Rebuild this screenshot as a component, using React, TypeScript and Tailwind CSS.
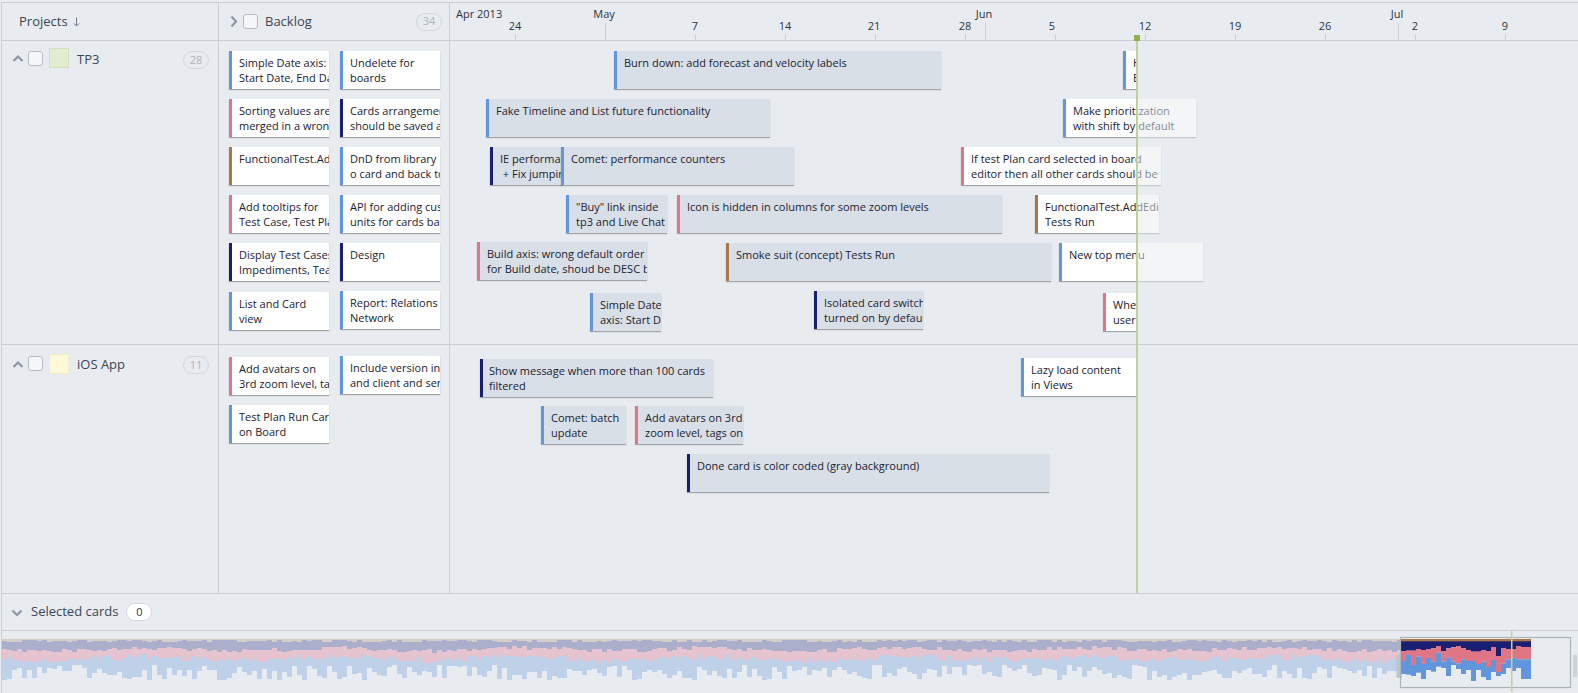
import React from "react";

type Kind = "blue" | "pink" | "navy" | "brown";

const edge: Record<Kind, string> = {
  blue: "border-l-[#6296dc]",
  pink: "border-l-[#e07585]",
  navy: "border-l-[#1b1f72]",
  brown: "border-l-[#a8774a]",
};

function Chevron({ dir, className }: { dir: "up" | "down" | "right"; className: string }) {
  const pts = dir === "up" ? "1.5,7 6,2.5 10.5,7" : dir === "down" ? "1.5,2.5 6,7 10.5,2.5" : "2.5,0.5 7,5.5 2.5,10.5";
  const vb = dir === "right" ? "0 0 9 11" : "0 0 12 9";
  return (
    <svg viewBox={vb} className={className} fill="none" stroke="#8c98a5" strokeWidth="2.2">
      <polyline points={pts} />
    </svg>
  );
}

function Check() {
  return <span className="block h-[15px] w-[15px] shrink-0 rounded-[3px] border border-[#b5bcc5] bg-[#f5f6f8]" />;
}

function Badge({ n, strong }: { n: string; strong?: boolean }) {
  return (
    <span
      className={
        strong
          ? "flex h-[18px] w-[26px] shrink-0 items-center justify-center rounded-full border border-[#d3d8df] bg-white text-[11px] text-[#2a3442]"
          : "flex h-[18px] w-[26px] shrink-0 items-center justify-center rounded-full border border-[#d3d8df] text-[11px] text-[#adb4bd]"
      }
    >
      {n}
    </span>
  );
}

function Lines({ lines, tight }: { lines: string[]; tight?: boolean }) {
  return (
    <div className={tight ? "pl-[6px] pt-[4px]" : "pl-[7px] pt-[4px]"}>
      {lines.map((l, i) => (
        <div key={i} className="h-[15px] whitespace-nowrap text-[11px] leading-[15px] text-[#1a2230]">
          {l}
        </div>
      ))}
    </div>
  );
}

function BacklogCard({ kind, lines, nudge }: { kind: Kind; lines: string[]; nudge?: string }) {
  return (
    <div
      className={`h-[38px] w-[100px] shrink-0 overflow-hidden border-l-[3px] bg-white shadow-[0_1px_1px_rgba(0,0,0,0.3)] ${edge[kind]} ${nudge ?? ""}`}
    >
      <Lines lines={lines} />
    </div>
  );
}

type TL = { pos: string; kind: Kind; lines: string[]; past?: boolean; tight?: boolean };

function TimelineCard({ pos, kind, lines, past, tight }: TL) {
  return (
    <div
      className={`absolute h-[38px] overflow-hidden border-l-[3px] shadow-[0_1px_1px_rgba(0,0,0,0.3)] ${pos} ${edge[kind]} ${
        past ? "bg-[#d9dfe7]" : "bg-white"
      }`}
    >
      <Lines lines={lines} tight={tight} />
    </div>
  );
}

const row1: TL[] = [
  { pos: "left-[164px] top-[10px] w-[327px]", kind: "blue", past: true, lines: ["Burn down: add forecast and velocity labels"] },
  { pos: "left-[36px] top-[58px] w-[284px]", kind: "blue", past: true, lines: ["Fake Timeline and List future functionality"] },
  { pos: "left-[40px] top-[106px] w-[72px]", kind: "navy", past: true, lines: ["IE performance", "\u00a0+ Fix jumping"] },
  { pos: "left-[111px] top-[106px] w-[233px]", kind: "blue", past: true, lines: ["Comet: performance counters"] },
  { pos: "left-[511px] top-[106px] w-[200px]", kind: "pink", lines: ["If test Plan card selected in board", "editor then all other cards should be"] },
  { pos: "left-[673px] top-[10px] w-[13px]", kind: "blue", lines: ["Hide", "Edit"] },
  { pos: "left-[613px] top-[58px] w-[133px]", kind: "blue", lines: ["Make prioritization", "with shift by default"] },
  { pos: "left-[116px] top-[154px] w-[101px]", kind: "blue", past: true, lines: ['"Buy" link inside', "tp3 and Live Chat"] },
  { pos: "left-[227px] top-[154px] w-[325px]", kind: "pink", past: true, lines: ["Icon is hidden in columns for some zoom levels"] },
  { pos: "left-[585px] top-[154px] w-[124px]", kind: "brown", lines: ["FunctionalTest.AddEdit", "Tests Run"] },
  { pos: "left-[27px] top-[201px] w-[170px]", kind: "pink", past: true, lines: ["Build axis: wrong default order", "for Build date, shoud be DESC by"] },
  { pos: "left-[276px] top-[202px] w-[325px]", kind: "brown", past: true, lines: ["Smoke suit (concept) Tests Run"] },
  { pos: "left-[609px] top-[202px] w-[144px]", kind: "blue", lines: ["New top menu"] },
  { pos: "left-[140px] top-[252px] w-[71px]", kind: "blue", past: true, lines: ["Simple Date", "axis: Start Date"] },
  { pos: "left-[364px] top-[250px] w-[109px]", kind: "navy", past: true, lines: ["Isolated card switch", "turned on by default"] },
  { pos: "left-[653px] top-[252px] w-[33px]", kind: "pink", lines: ["When", "user"] },
];

const row2: TL[] = [
  { pos: "left-[30px] top-[14px] w-[233px]", kind: "navy", past: true, tight: true, lines: ["Show message when more than 100 cards", "filtered"] },
  { pos: "left-[91px] top-[61px] w-[85px]", kind: "blue", past: true, lines: ["Comet: batch", "update"] },
  { pos: "left-[185px] top-[61px] w-[108px]", kind: "pink", past: true, lines: ["Add avatars on 3rd", "zoom level, tags on"] },
  { pos: "left-[237px] top-[109px] w-[362px]", kind: "navy", past: true, lines: ["Done card is color coded (gray background)"] },
  { pos: "left-[571px] top-[13px] w-[115px]", kind: "blue", lines: ["Lazy load content", "in Views"] },
];

const days = [
  { t: "24", c: "left-[65px]", l: "left-[54px]" },
  { t: "7", c: "left-[245px]", l: "left-[234px]" },
  { t: "14", c: "left-[335px]", l: "left-[324px]" },
  { t: "21", c: "left-[425px]", l: "left-[413px]" },
  { t: "28", c: "left-[515px]", l: "left-[504px]" },
  { t: "5", c: "left-[605px]", l: "left-[591px]" },
  { t: "12", c: "left-[695px]", l: "left-[684px]" },
  { t: "19", c: "left-[785px]", l: "left-[774px]" },
  { t: "26", c: "left-[875px]", l: "left-[864px]" },
  { t: "2", c: "left-[965px]", l: "left-[954px]" },
  { t: "9", c: "left-[1055px]", l: "left-[1044px]" },
];

const months = [
  { t: "May", c: "left-[155px]", l: "left-[134px]" },
  { t: "Jun", c: "left-[535px]", l: "left-[514px]" },
  { t: "Jul", c: "left-[948px]", l: "left-[927px]" },
];

function Axis() {
  return (
    <div className="relative h-full flex-1 text-[11px] leading-[15px] text-[#2a3442]">
      <span className="absolute left-[6px] top-[3px] whitespace-nowrap">Apr 2013</span>
      {months.map((m) => (
        <React.Fragment key={m.t}>
          <span className={`absolute top-[3px] w-[40px] text-center ${m.l}`}>{m.t}</span>
          <span className={`absolute bottom-0 h-[17px] w-px bg-[#c9ced6] ${m.c}`} />
        </React.Fragment>
      ))}
      {days.map((d) => (
        <React.Fragment key={d.t}>
          <span className={`absolute top-[15px] w-[22px] text-center ${d.l}`}>{d.t}</span>
          <span className={`absolute bottom-0 h-[6px] w-px bg-[#c9ced6] ${d.c}`} />
        </React.Fragment>
      ))}
    </div>
  );
}

const sel: [number, number, number][] = [
  [153, 183, 222], [152, 165, 224], [152, 195, 228], [147, 170, 218], [150, 192, 237], [147, 174, 210],
  [145, 185, 215], [138, 158, 200], [153, 185, 204], [145, 173, 228], [142, 185, 195], [138, 190, 207],
  [145, 178, 222], [150, 183, 210], [155, 183, 243], [155, 192, 210], [150, 185, 231], [153, 201, 240],
  [141, 180, 216], [168, 216, 228], [145, 190, 222], [147, 178, 204], [147, 173, 213], [138, 178, 204],
  [141, 178, 237], [141, 178, 237],
];

function Chart() {
  const cols: React.ReactNode[] = [];
  let seed = 12345;
  const rnd = () => {
    seed = (seed * 1103515245 + 12345) & 0x7fffffff;
    return seed / 0x7fffffff;
  };
  const Y = (y: number) => y - 631;
  for (let i = 0; i < 280; i++) {
    const x = i * 5;
    const wave = Math.sin(i / 6) * 1.5;
    const t1 = 640 + Math.floor(rnd() * 3);
    const p1 = 648 + Math.floor(rnd() * 4 + wave);
    const k1 = 656 + Math.floor(rnd() * 6 + wave);
    const b1 = Math.max(k1 + 4, 665 + Math.floor(rnd() * 16));
    cols.push(
      <g key={i}>
        <rect x={x} y={Y(639)} width="5" height={t1 - 639 + 1} className="fill-[#d6cec9]" />
        <rect x={x} y={Y(t1)} width="5" height={p1 - t1} className="fill-[#abafcb]" />
        <rect x={x} y={Y(p1)} width="5" height={k1 - p1} className="fill-[#e6c4cf]" />
        <rect x={x} y={Y(k1)} width="5" height={b1 - k1} className="fill-[#bed1e9]" />
      </g>
    );
  }
  sel.forEach(([a, b, c], i) => {
    const x = 1401 - 2 + i * 5;
    const y = (v: number) => Y(600 + v / 3);
    cols.push(
      <g key={`s${i}`}>
        <rect x={x} y={y(117)} width="5" height="3" className="fill-[#a8774a]" />
        <rect x={x} y={y(124)} width="5" height={(a - 124) / 3} className="fill-[#1b1f72]" />
        <rect x={x} y={y(a)} width="5" height={(b - a) / 3} className="fill-[#e07585]" />
        <rect x={x} y={y(b)} width="5" height={(c - b) / 3} className="fill-[#6296dc]" />
      </g>
    );
  });
  return (
    <svg viewBox="0 0 1576 61" className="block h-[61px] w-[1576px]">
      {cols}
      <rect x="1398.5" y="6.5" width="170" height="50" fill="none" stroke="#aab5b8" strokeWidth="1.2" />
      <rect x="1509" y="0" width="1.5" height="61" className="fill-[#bfd29a]" />
      <rect x="1394.5" y="24" width="1" height="22" className="fill-[#b5bcc0]" />
      <rect x="1396.5" y="24" width="1" height="22" className="fill-[#b5bcc0]" />
      <rect x="1571.5" y="24" width="1" height="22" className="fill-[#b5bcc0]" />
      <rect x="1573.5" y="24" width="1" height="22" className="fill-[#b5bcc0]" />
    </svg>
  );
}

function Overlay() {
  return <div className="absolute inset-y-0 left-[688px] right-0 bg-[#e8ebf0]/50" />;
}

export default function App() {
  return (
    <div className="h-[693px] w-[1578px] overflow-hidden bg-[#e8ebf0] pl-px pt-[2px] font-['Open_Sans',sans-serif]">
      <div className="flex h-full flex-col border-l border-t border-[#c9ced6]">
        <div className="relative flex flex-col">
          <div className="flex h-[38px] border-b border-[#c9ced6]">
            <div className="flex w-[217px] shrink-0 items-center gap-[5px] border-r border-[#c9ced6] pl-[17px] text-[13px] text-[#3b4654]">
              <span>Projects</span>
              <svg viewBox="0 0 7 10" className="h-[10px] w-[7px]" fill="none" stroke="#6f7a87" strokeWidth="1">
                <path d="M3.5 0.5V9M1 6.5L3.5 9L6 6.5" />
              </svg>
            </div>
            <div className="flex w-[231px] shrink-0 items-center border-r border-[#c9ced6] pl-[10px] text-[13px] text-[#3b4654]">
              <Chevron dir="right" className="h-[11px] w-[9px] shrink-0" />
              <span className="ml-[5px]"><Check /></span>
              <span className="ml-[7px] flex-1">Backlog</span>
              <span className="mr-[7px]"><Badge n="34" /></span>
            </div>
            <Axis />
          </div>

          <div className="flex h-[304px] border-b border-[#c9ced6]">
            <div className="flex w-[217px] shrink-0 items-start border-r border-[#c9ced6] pl-[10px] pt-[7px] text-[13px] text-[#3b4654]">
              <Chevron dir="up" className="mt-[6px] h-[9px] w-[12px] shrink-0" />
              <span className="ml-[4px] mt-[3px]"><Check /></span>
              <span className="ml-[6px] h-[20px] w-[20px] shrink-0 border border-[#d4e0bd] bg-[#e2ecd0]" />
              <span className="ml-[8px] flex-1 pt-[1px] leading-[20px]">TP3</span>
              <span className="mr-[9px] mt-[3px]"><Badge n="28" /></span>
            </div>
            <div className="flex w-[231px] shrink-0 gap-[11px] overflow-hidden border-r border-[#c9ced6] pl-[10px] pt-[10px]">
              <div className="flex flex-col gap-[10px]">
                <BacklogCard kind="blue" lines={["Simple Date axis:", "Start Date, End Date"]} />
                <BacklogCard kind="pink" lines={["Sorting values are", "merged in a wrong"]} />
                <BacklogCard kind="brown" lines={["FunctionalTest.AddEdit"]} />
                <BacklogCard kind="pink" lines={["Add tooltips for", "Test Case, Test Plan"]} />
                <BacklogCard kind="navy" lines={["Display Test Cases,", "Impediments, Team"]} />
                <BacklogCard kind="blue" nudge="mt-px" lines={["List and Card", "view"]} />
              </div>
              <div className="flex flex-col gap-[10px]">
                <BacklogCard kind="blue" lines={["Undelete for", "boards"]} />
                <BacklogCard kind="navy" lines={["Cards arrangement", "should be saved and"]} />
                <BacklogCard kind="blue" lines={["DnD from library", "o card and back to"]} />
                <BacklogCard kind="blue" lines={["API for adding custom", "units for cards based"]} />
                <BacklogCard kind="navy" lines={["Design"]} />
                <BacklogCard kind="blue" lines={["Report: Relations", "Network"]} />
              </div>
            </div>
            <div className="relative flex-1 overflow-hidden">
              {row1.map((c, i) => (
                <TimelineCard key={i} {...c} />
              ))}
              <Overlay />
            </div>
          </div>

          <div className="flex h-[249px] border-b border-[#c9ced6]">
            <div className="flex w-[217px] shrink-0 items-start border-r border-[#c9ced6] pl-[10px] pt-[9px] text-[13px] text-[#3b4654]">
              <Chevron dir="up" className="mt-[6px] h-[9px] w-[12px] shrink-0" />
              <span className="ml-[4px] mt-[2px]"><Check /></span>
              <span className="ml-[6px] h-[20px] w-[20px] shrink-0 border border-[#f0ebc8] bg-[#fdf8d8]" />
              <span className="ml-[8px] flex-1 leading-[20px]">iOS App</span>
              <span className="mr-[9px] mt-[2px]"><Badge n="11" /></span>
            </div>
            <div className="flex w-[231px] shrink-0 gap-[11px] overflow-hidden border-r border-[#c9ced6] pl-[10px] pt-[11px]">
              <div className="flex flex-col gap-[10px] pt-px">
                <BacklogCard kind="pink" lines={["Add avatars on", "3rd zoom level, tags"]} />
                <BacklogCard kind="blue" lines={["Test Plan Run Card", "on Board"]} />
              </div>
              <div>
                <BacklogCard kind="blue" lines={["Include version in UI", "and client and server"]} />
              </div>
            </div>
            <div className="relative flex-1 overflow-hidden">
              {row2.map((c, i) => (
                <TimelineCard key={i} {...c} />
              ))}
              <Overlay />
            </div>
          </div>

          <div className="absolute left-[1134px] top-[32px] h-[558px] w-[2px] bg-[#bfd29a]" />
          <div className="absolute left-[1132px] top-[32px] h-[6px] w-[6px] bg-[#8fb04c]" />
        </div>

        <div className="flex h-[37px] shrink-0 items-center border-b border-[#c9ced6] pl-[9px] text-[13px] text-[#3b4654]">
          <Chevron dir="down" className="h-[9px] w-[12px] shrink-0" />
          <span className="ml-[8px]">Selected cards</span>
          <span className="ml-[8px]"><Badge n="0" strong /></span>
        </div>

        <div className="flex-1 overflow-hidden">
          <Chart />
        </div>
      </div>
    </div>
  );
}
